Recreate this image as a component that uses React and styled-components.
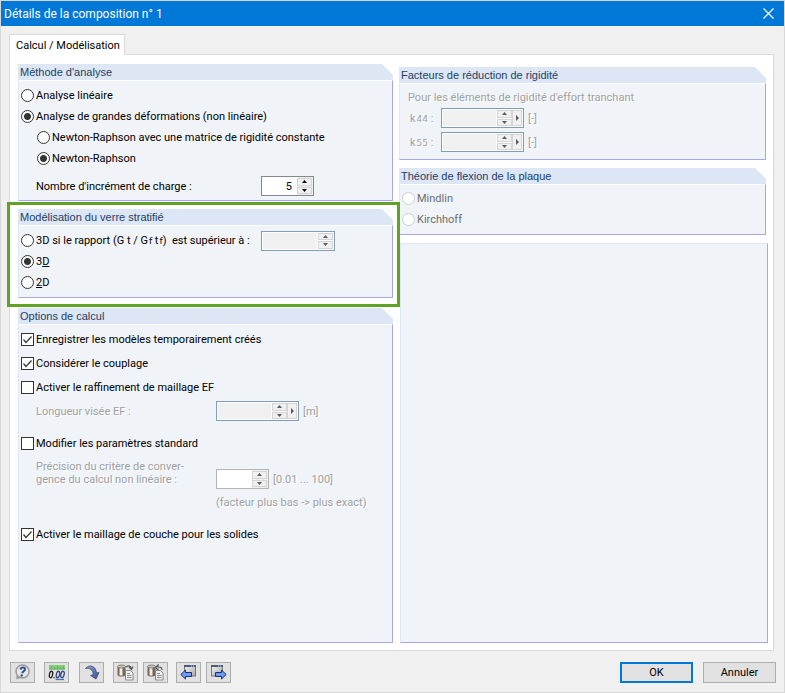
import React from 'react'
import styled, { createGlobalStyle, css } from 'styled-components'

function Spinner({ id, label, value = '', size = 'small', disabled, framed, more }) {
  return (
    <SpinBox $size={size} $framed={framed} $disabled={disabled}>
      <SpinInput id={id} aria-label={label} defaultValue={value} disabled={disabled} $grey={framed} />
      <SpinArrows>
        <ArrowButton type="button" aria-label="Augmenter" disabled={disabled}>
          <svg width="5" height="3" viewBox="0 0 5 3"><path d="M0 3L2.500 0L5 3Z" fill="currentColor" /></svg>
        </ArrowButton>
        <ArrowButton type="button" aria-label="Diminuer" disabled={disabled}>
          <svg width="5" height="3" viewBox="0 0 5 3"><path d="M0 0H5L2.500 3Z" fill="currentColor" /></svg>
        </ArrowButton>
      </SpinArrows>
      {more && (
        <MoreButton type="button" aria-label="Autres valeurs" disabled={disabled}>
          <svg width="3" height="6" viewBox="0 0 3 6"><path d="M0 0L3 3L0 6Z" fill="currentColor" /></svg>
        </MoreButton>
      )}
    </SpinBox>
  )
}

function Radio({ name, checked, disabled, indent, children }) {
  return (
    <RadioRow $indent={indent} $disabled={disabled}>
      <RadioInput type="radio" name={name} defaultChecked={checked} disabled={disabled} />
      <span>{children}</span>
    </RadioRow>
  )
}

function Check({ checked, children }) {
  return (
    <CheckRow>
      <CheckBox>
        <CheckInput type="checkbox" defaultChecked={checked} />
        <CheckMark viewBox="0 0 13 13"><path d="M2.500 6.500L5 9.500L10.500 3.500" /></CheckMark>
      </CheckBox>
      <span>{children}</span>
    </CheckRow>
  )
}

function Group({ title, highlight, grow, children }) {
  return (
    <GroupBox $highlight={highlight} $grow={grow}>
      <GroupTitle>{title}</GroupTitle>
      <GroupBody>{children}</GroupBody>
    </GroupBox>
  )
}

function App() {
  return (
    <Dialog>
      <GlobalStyle />
      <TitleBar>
        <Title>Détails de la composition n° 1</Title>
        <CloseButton type="button" aria-label="Fermer">
          <svg width="11" height="11" viewBox="0 0 11 11"><path d="M.5 .5L10.500 10.500M10.500 .5L.5 10.500" stroke="#fff" strokeWidth="1.200" /></svg>
        </CloseButton>
      </TitleBar>
      <Content>
        <Tab type="button">Calcul / Modélisation</Tab>
        <Panel>
          <LeftColumn>
            <Group title="Méthode d'analyse">
              <Radio name="methode">Analyse linéaire</Radio>
              <Radio name="methode" checked>Analyse de grandes déformations (non linéaire)</Radio>
              <Radio name="iteration" indent>Newton-Raphson avec une matrice de rigidité constante</Radio>
              <Radio name="iteration" indent checked>Newton-Raphson</Radio>
              <IncrementRow>
                <FieldLabel htmlFor="increment">Nombre d'incrément de charge :</FieldLabel>
                <Spinner id="increment" value="5" />
              </IncrementRow>
            </Group>
            <Group title="Modélisation du verre stratifié" highlight>
              <RatioRow>
                <Radio name="verre">3D si le rapport (G t / G<Sub>f</Sub> t<Sub>f</Sub>) &nbsp;est supérieur à :</Radio>
                <Spinner label="Rapport" size="medium" disabled framed />
              </RatioRow>
              <Radio name="verre" checked>3<u>D</u></Radio>
              <Radio name="verre"><u>2</u>D</Radio>
            </Group>
            <Group title="Options de calcul" grow>
              <Checks>
                <Check checked>Enregistrer les modèles temporairement créés</Check>
                <Check checked>Considérer le couplage</Check>
                <Check>Activer le raffinement de maillage EF</Check>
                <LengthRow>
                  <FieldLabel htmlFor="longueur" $disabled>Longueur visée EF :</FieldLabel>
                  <Spinner id="longueur" size="large" disabled framed more />
                  <Unit>[m]</Unit>
                </LengthRow>
                <Check>Modifier les paramètres standard</Check>
                <PrecisionRow>
                  <FieldLabel htmlFor="precision" $disabled>Précision du critère de conver-<br />gence du calcul non linéaire :</FieldLabel>
                  <Spinner id="precision" disabled />
                  <Unit>[0.01 ... 100]</Unit>
                </PrecisionRow>
                <Hint>(facteur plus bas -&gt; plus exact)</Hint>
                <Check checked>Activer le maillage de couche pour les solides</Check>
              </Checks>
            </Group>
          </LeftColumn>
          <RightColumn>
            <Group title="Facteurs de réduction de rigidité">
              <Factors>
                <Note>Pour les éléments de rigidité d'effort tranchant</Note>
                <FactorRow>
                  <FactorLabel htmlFor="k44">k<Sub>44</Sub> :</FactorLabel>
                  <Spinner id="k44" size="large" disabled framed more />
                  <Unit>[-]</Unit>
                </FactorRow>
                <FactorRow>
                  <FactorLabel htmlFor="k55">k<Sub>55</Sub> :</FactorLabel>
                  <Spinner id="k55" size="large" disabled framed more />
                  <Unit>[-]</Unit>
                </FactorRow>
              </Factors>
            </Group>
            <Group title="Théorie de flexion de la plaque">
              <Radio name="theorie" disabled>Mindlin</Radio>
              <Radio name="theorie" disabled>Kirchhoff</Radio>
            </Group>
            <EmptyBox />
          </RightColumn>
        </Panel>
      </Content>
      <Footer>
        <Tools>
          <ToolButton type="button" aria-label="Aide"><HelpIcon /></ToolButton>
          <ToolButton type="button" aria-label="Unités" $gap={9}><UnitsIcon /></ToolButton>
          <ToolButton type="button" aria-label="Par défaut" $gap={10}><ArcIcon /></ToolButton>
          <ToolButton type="button" aria-label="Charger" $gap={9}><StoreIcon /></ToolButton>
          <ToolButton type="button" aria-label="Enregistrer" $gap={5}><StoreIcon back /></ToolButton>
          <ToolButton type="button" aria-label="Composition précédente" $gap={8}><WindowIcon left /></ToolButton>
          <ToolButton type="button" aria-label="Composition suivante" $gap={5}><WindowIcon /></ToolButton>
        </Tools>
        <Actions>
          <ActionButton type="button" $primary>OK</ActionButton>
          <ActionButton type="button">Annuler</ActionButton>
        </Actions>
      </Footer>
    </Dialog>
  )
}

export default App

const HelpIcon = () => (
  <svg width="17" height="17" viewBox="0 0 17 17">
    <path d="M2.500 11L2.500 15.500L7.500 13.500Z" fill="#999" />
    <circle cx="8.500" cy="7.500" r="6.500" fill="#e6e8e8" stroke="#9b9d9d" strokeWidth="1.500" />
    <path d="M6.500 5.500C7 3 11.500 2.800 11 5.500C10.700 7.300 8.700 7 8.200 9.200" fill="none" stroke="#35508f" strokeWidth="2" />
    <circle cx="7.700" cy="11.500" r="1.200" fill="#35508f" />
  </svg>
)

const UnitsIcon = () => (
  <svg width="17" height="17" viewBox="0 0 17 17">
    <rect x="1" y="1" width="16" height="4.500" fill="#84cf78" />
    <path d="M1 5H17M3.500 2V4M6.500 3V4M9.500 2V4M12.500 3V4M15.500 2V4" stroke="#5fae5c" />
    <g fill="none" strokeWidth="1.300">
      <ellipse cx="3" cy="10.500" rx="1.600" ry="3.300" transform="rotate(14 3 10.500)" stroke="#222" />
      <path d="M6 13V14.300" stroke="#222" />
      <ellipse cx="10" cy="10.500" rx="1.600" ry="3.300" transform="rotate(14 10 10.500)" stroke="#2c4684" />
      <ellipse cx="14.500" cy="10.500" rx="1.600" ry="3.300" transform="rotate(14 14.500 10.500)" stroke="#2c4684" />
      <path d="M7.500 15.500H16" stroke="#5470b5" />
    </g>
  </svg>
)

const ArcIcon = () => (
  <svg width="17" height="17" viewBox="0 0 17 17">
    <defs>
      <linearGradient id="arc" x1="0" y1="0" x2="1" y2="1">
        <stop offset="0" stopColor="#9aa3b5" />
        <stop offset=".5" stopColor="#5f7ab8" />
        <stop offset="1" stopColor="#3553a0" />
      </linearGradient>
    </defs>
    <path d="M2.500 4.500C6 0 13 1.500 13.500 9L16 8.500L13 15L7.500 11.500L10.300 10.500C10 6 6.500 3.500 2.500 4.500Z" fill="url(#arc)" stroke="#33415f" strokeWidth=".7" />
  </svg>
)

const StoreIcon = ({ back }) => (
  <svg width="17" height="17" viewBox="0 0 17 17">
    <path d="M.5 2.500V11C1.500 13 7.500 13 8.500 11V2.500" fill="#74685d" />
    <path d="M2.500 3V11.500H5.500V3Z" fill="#efebe6" />
    <ellipse cx="4.500" cy="2.500" rx="4" ry="1.500" fill="#c9c3bb" stroke="#655c54" strokeWidth=".7" />
    {back
      ? <path d="M15 6C15 3 13 3 11 3V1L8.500 3.500L11 6V4.500" fill="none" stroke="#555" strokeWidth="1.200" />
      : <path d="M9 3C12 1 14 2 14 4M12 3L14.500 5.500L16 2.500" fill="none" stroke="#555" strokeWidth="1.200" />}
    <path d="M8.500 6.500H13.500L16 9V16H8.500Z" fill="#f2f2f2" stroke="#888" />
    <path d="M10 9.500H13M10 11.500H14.500M10 13.500H14.500" stroke="#888" />
  </svg>
)

const WindowIcon = ({ left }) => (
  <svg width="17" height="17" viewBox="0 0 17 17">
    <defs>
      <linearGradient id="pane" x1="0" y1="0" x2="1" y2="1">
        <stop offset="0" stopColor="#f4f4f4" />
        <stop offset="1" stopColor="#a8a8a8" />
      </linearGradient>
    </defs>
    <rect x={left ? 4.500 : 1.500} y="1.500" width="11" height="10.500" fill="url(#pane)" stroke="#777" />
    <path d={left ? 'M4 2H16' : 'M1 2H13'} stroke="#4a5a7c" strokeWidth="2" />
    <path d={left ? 'M11 2H15' : 'M8 2H12'} stroke="#dfe6f4" strokeDasharray="1 1" />
    <path d={left ? 'M.8 10.500L5.500 6V8.500H11.500V12.500H5.500V15Z' : 'M16.200 10.500L11.500 6V8.500H5.500V12.500H11.500V15Z'} fill="#6f9af5" stroke="#1d3268" strokeWidth="1" />
  </svg>
)

const GlobalStyle = createGlobalStyle`
  * {
    box-sizing: border-box;
  }
  body {
    margin: 0;
    background: #f0f0f0;
  }
  button,
  input {
    font: inherit;
    margin: 0;
    padding: 0;
  }
  svg {
    display: block;
    flex: none;
  }
`

const Dialog = styled.div`
  display: flex;
  flex-direction: column;
  min-height: 100vh;
  border: 1px solid #d7d7d7;
  background: #f0f0f0;
  color: #000;
  font: 11px/13px Roboto, 'Noto Sans', sans-serif;
`

const TitleBar = styled.header`
  display: flex;
  align-items: center;
  justify-content: space-between;
  height: 25px;
  padding: 0 10px 0 3px;
  background: #0078d7;
  color: #fff;
`

const Title = styled.h1`
  margin: 0;
  font: 12px/16px Roboto, sans-serif;
`

const CloseButton = styled.button`
  border: 0;
  background: none;
`

const Content = styled.main`
  display: flex;
  flex: 1;
  flex-direction: column;
  padding: 8px 10px 0 8px;
`

const Tab = styled.button`
  align-self: flex-start;
  height: 21px;
  margin-bottom: -1px;
  padding: 0 4px 0 6px;
  border: 1px solid #d9d9d9;
  border-bottom: 0;
  background: #fff;
  z-index: 1;
`

const Panel = styled.div`
  display: flex;
  flex: 1;
  gap: 6px;
  padding: 9px 5px 7px 8px;
  border: 1px solid #d9d9d9;
  background: #fff;
`

const LeftColumn = styled.div`
  display: flex;
  flex: 375 1 0;
  flex-direction: column;
  gap: 8px;
`

const RightColumn = styled.div`
  display: flex;
  flex: 369 1 0;
  flex-direction: column;
  gap: 8px;
  padding-top: 3px;
`

const GroupBox = styled.section`
  display: flex;
  flex-direction: column;
  flex: ${({ $grow }) => ($grow ? 1 : 'none')};
  ${RightColumn} & {
    margin-right: 2px;
  }
  ${({ $highlight }) => $highlight && css`
    position: relative;
    margin-bottom: 2px;
    &::after {
      content: '';
      position: absolute;
      z-index: 1;
      inset: -7px -7px -9px -11px;
      border: 3px solid #5ea324;
      pointer-events: none;
    }
  `}
`

const GroupTitle = styled.h2`
  height: 16px;
  margin: 0;
  padding-left: 2px;
  background: #dce6f4;
  clip-path: polygon(0 0, calc(100% - 11px) 0, 100% 11px, 100% 100%, 0 100%);
  color: #1c3f66;
  font: 11px/16px 'Liberation Sans', sans-serif;
`

const GroupBody = styled.div`
  flex: 1;
  padding: 4px 0 4px 2px;
  border: 1px solid #a6a6ea;
  border-top-color: #fff;
  border-left-color: #dce6f4;
  background: #f0f4f9;
  ${RightColumn} & {
    padding-top: 3px;
  }
`

const EmptyBox = styled.div`
  flex: 1;
  margin-left: 1px;
  border: 1px solid #a6a6ea;
  border-top-color: #dce6f4;
  border-left-color: #dce6f4;
  background: #f0f4f9;
`

const RadioRow = styled.label`
  display: flex;
  align-items: center;
  gap: 2px;
  height: 21px;
  padding-left: ${({ $indent }) => ($indent ? 16 : 0)}px;
  color: ${({ $disabled }) => ($disabled ? '#6d6d6d' : '#000')};
  white-space: nowrap;
`

const RadioInput = styled.input`
  flex: none;
  width: 13px;
  height: 13px;
  appearance: none;
  border: 1px solid #333;
  border-radius: 50%;
  background: #fff;
  &:checked {
    background: radial-gradient(circle, #333 3px, #fff 4px);
  }
  &:disabled {
    border-color: #ccc;
  }
`

const CheckRow = styled.label`
  display: flex;
  align-items: center;
  gap: 2px;
  height: 24px;
`

const CheckBox = styled.span`
  display: grid;
  width: 13px;
  height: 13px;
  & > * {
    grid-area: 1 / 1;
  }
`

const CheckInput = styled.input`
  width: 13px;
  height: 13px;
  appearance: none;
  border: 1px solid #333;
  background: #fff;
`

const CheckMark = styled.svg`
  width: 13px;
  height: 13px;
  fill: none;
  stroke: #333;
  stroke-width: 1.2;
  pointer-events: none;
  visibility: hidden;
  ${CheckInput}:checked + & {
    visibility: visible;
  }
`

const Sub = styled.span`
  margin-left: 1px;
  font: 9px/9px 'DejaVu Sans', sans-serif;
`

const spinWidths = { small: 53, medium: 74, large: 83 }

const SpinBox = styled.div`
  display: flex;
  flex: none;
  width: ${({ $size }) => spinWidths[$size]}px;
  height: 20px;
  padding: 0 1px 0 0;
  border: 1px solid ${({ $framed, $disabled }) => ($framed ? '#7f9db9' : $disabled ? '#b4b4b4' : '#828790')};
  background: ${({ $framed }) => ($framed ? '#fff' : '#f0f0f0')};
  color: ${({ $disabled }) => ($disabled ? '#5a5a5a' : '#000')};
`

const SpinInput = styled.input`
  flex: 1;
  min-width: 0;
  padding: 0 5px;
  border: ${({ $grey }) => ($grey ? '1px solid #fff' : '0')};
  background: ${({ $grey }) => ($grey ? '#f0f0f0' : '#fff')};
  text-align: right;
`

const SpinArrows = styled.div`
  display: flex;
  flex-direction: column;
  width: 15px;
  gap: 1px;
  padding: 1px 0;
`

const ArrowButton = styled.button`
  display: flex;
  flex: 1;
  align-items: center;
  justify-content: center;
  border: 1px solid #d4d4d4;
  background: #f0f0f0;
  color: inherit;
`

const MoreButton = styled(ArrowButton)`
  flex: none;
  width: 10px;
  margin: 1px 0;
`

const FieldLabel = styled.label`
  color: ${({ $disabled }) => ($disabled ? '#a0a0a0' : '#000')};
  text-shadow: ${({ $disabled }) => ($disabled ? '1px 1px #fff' : 'none')};
`

const IncrementRow = styled.div`
  display: grid;
  grid-template-columns: 225px auto;
  align-items: center;
  justify-content: start;
  margin-top: 7px;
  padding-left: 15px;
`

const RatioRow = styled.div`
  display: grid;
  grid-template-columns: 240px auto;
  align-items: center;
`

const Checks = styled.div`
  margin-top: -2px;
`

const LengthRow = styled.div`
  display: grid;
  grid-template-columns: 180px auto auto;
  align-items: center;
  justify-content: start;
  height: 24px;
  margin-bottom: 8px;
  padding-left: 15px;
`

const Unit = styled.span`
  padding-left: 4px;
  color: #a0a0a0;
  text-shadow: 1px 1px #fff;
`

const PrecisionRow = styled(LengthRow)`
  align-items: end;
  height: 34px;
  margin: 0;
  ${FieldLabel}, ${Unit} {
    padding-bottom: 3px;
  }
`

const Hint = styled.p`
  margin: 7px 0 13px 195px;
  color: #a0a0a0;
  text-shadow: 1px 1px #fff;
`

const Factors = styled.div`
  padding: 4px 6px 1px;
`

const Note = styled.p`
  margin: 0 0 2px;
  color: #a0a0a0;
  text-shadow: 1px 1px #fff;
`

const FactorRow = styled.div`
  display: grid;
  grid-template-columns: 31px auto auto;
  align-items: center;
  justify-content: start;
  height: 24px;
  padding-left: 2px;
`

const FactorLabel = styled.label`
  color: #a0a0a0;
  text-shadow: 1px 1px #fff;
`

const Footer = styled.footer`
  display: flex;
  justify-content: space-between;
  padding: 11px 8px 9px 9px;
`

const Tools = styled.div`
  display: flex;
`

const ToolButton = styled.button`
  display: flex;
  align-items: center;
  justify-content: center;
  width: 25px;
  height: 21px;
  margin-left: ${({ $gap = 0 }) => $gap}px;
  border: 1px solid #adadad;
  background: #e1e1e1;
`

const Actions = styled.div`
  display: flex;
  gap: 10px;
`

const ActionButton = styled.button`
  width: 73px;
  height: 21px;
  border: ${({ $primary }) => ($primary ? '2px solid #0078d7' : '1px solid #adadad')};
  background: #e1e1e1;
`
